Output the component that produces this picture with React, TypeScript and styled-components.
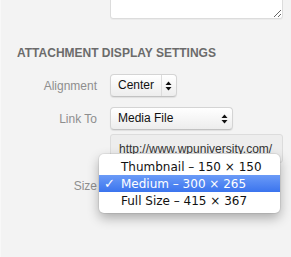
import { createGlobalStyle } from 'styled-components';
import styled from 'styled-components';

const GlobalStyle = createGlobalStyle`
  html, body {
    margin: 0;
    padding: 0;
    background: #f3f3f3;
  }
  * {
    box-sizing: border-box;
  }
`;

const sizes = [
  { label: 'Thumbnail – 150 × 150', selected: false },
  { label: 'Medium – 300 × 265', selected: true },
  { label: 'Full Size – 415 × 367', selected: false },
];

function Arrows() {
  return (
    <svg width='7' height='10' viewBox='0 0 7 10'>
      <path d='M3.5 0.5 L6.5 4 H0.5 Z' fill='#111' />
      <path d='M3.5 9.5 L6.5 6 H0.5 Z' fill='#111' />
    </svg>
  );
}

export default function App() {
  return (
    <>
      <GlobalStyle />
      <Page>
        <Notes defaultValue='' />

        <Heading>Attachment Display Settings</Heading>

        <Row $gap={14}>
          <Label>Alignment</Label>
          <Select $width={67}>
            <SelectText>Center</SelectText>
            <ArrowBox $divider>
              <Arrows />
            </ArrowBox>
          </Select>
        </Row>

        <Row $gap={10}>
          <Label>Link To</Label>
          <Select $width={123}>
            <SelectText>Media File</SelectText>
            <ArrowBox>
              <Arrows />
            </ArrowBox>
          </Select>
        </Row>

        <Row $gap={4}>
          <Label />
          <UrlField readOnly value='http://www.wpuniversity.com/' />
        </Row>

        <Row $gap={11}>
          <Label>Size</Label>
          <Control>
            {/* the open menu covers the select, so only its frame is drawn */}
            <Select $width={160}>
              <SelectText />
              <ArrowBox>
                <Arrows />
              </ArrowBox>
            </Select>
            <Menu>
              {sizes.map((s) => (
                <MenuItem key={s.label} $active={s.selected}>
                  <Check>{s.selected ? '✓' : ''}</Check>
                  {s.label}
                </MenuItem>
              ))}
            </Menu>
          </Control>
        </Row>
      </Page>
    </>
  );
}

const Page = styled.div`
  position: relative;
  width: 291px;
  height: 257px;
  overflow: hidden;
  background: #f3f3f3;
  border-left: 1px solid #f8f8f8;
  font-family: 'Liberation Sans', Arial, sans-serif;
`;

const Notes = styled.textarea`
  display: block;
  width: 173px;
  height: 40px;
  margin: -21px 0 0 109px;
  background: #fff;
  border: 1px solid #dcdcdc;
  border-radius: 3px;
  box-shadow: 0 1px 0 rgba(0, 0, 0, 0.03);
  resize: vertical;
`;

const Heading = styled.h3`
  margin: 27px 0 0 16px;
  font-size: 12px;
  line-height: 14px;
  font-weight: bold;
  text-transform: uppercase;
  color: #6b6b6b;
`;

const Row = styled.div<{ $gap: number }>`
  display: flex;
  align-items: center;
  gap: 13px;
  margin-top: ${(p) => p.$gap}px;
`;

const Label = styled.span`
  width: 96px;
  flex: none;
  text-align: right;
  font-size: 12px;
  color: #8e8e8e;
`;

const Control = styled.div`
  position: relative;
`;

const Select = styled.div<{ $width: number }>`
  display: flex;
  align-items: stretch;
  width: ${(p) => p.$width}px;
  height: 23px;
  background: linear-gradient(#ffffff, #ededed);
  border: 1px solid #d4d4d4;
  border-bottom-color: #c2c2c2;
  border-radius: 4px;
  box-shadow: 0 1px 1px rgba(0, 0, 0, 0.08);
`;

const SelectText = styled.span`
  flex: 1;
  padding-left: 7px;
  font-size: 12px;
  line-height: 21px;
  color: #111;
  white-space: nowrap;
`;

const ArrowBox = styled.span<{ $divider?: boolean }>`
  display: flex;
  align-items: center;
  justify-content: center;
  width: 14px;
  margin-right: 1px;
  border-left: ${(p) => (p.$divider ? '1px solid #dcdcdc' : 'none')};
`;

const UrlField = styled.input`
  width: 173px;
  height: 29px;
  padding: 0 0 0 8px;
  background: #ededed;
  border: 1px solid #dcdcdc;
  border-radius: 3px;
  font-family: 'Liberation Sans', Arial, sans-serif;
  font-size: 12px;
  color: #333;
  outline: none;
`;

const Menu = styled.div`
  position: absolute;
  left: -11px;
  top: -20px;
  width: 181px;
  padding: 4px 0;
  background: #fff;
  border-radius: 5px;
  box-shadow: 0 0 0 1px rgba(0, 0, 0, 0.06), 0 5px 12px rgba(0, 0, 0, 0.3);
`;

const MenuItem = styled.div<{ $active: boolean }>`
  display: flex;
  align-items: center;
  height: 17px;
  font-family: 'DejaVu Sans', Verdana, sans-serif;
  font-size: 12px;
  color: ${(p) => (p.$active ? '#fff' : '#111')};
  background: ${(p) =>
    p.$active ? 'linear-gradient(#6b9bf7, #3b74ee)' : 'transparent'};
  white-space: nowrap;
`;

const Check = styled.span`
  width: 22px;
  padding-left: 5px;
  font-size: 13px;
  font-weight: bold;
`;
